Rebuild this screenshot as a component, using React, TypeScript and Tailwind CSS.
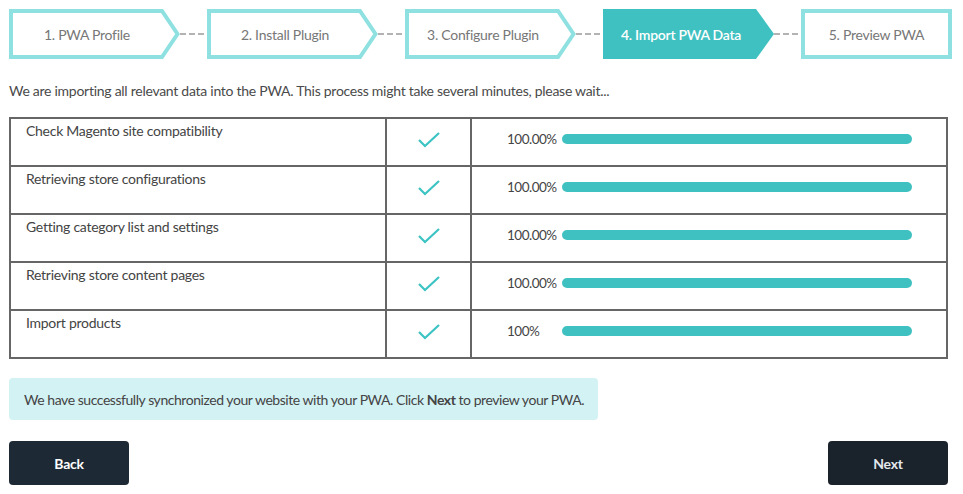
import React from "react";

const steps = [
  { label: "1. PWA Profile", active: false },
  { label: "2. Install Plugin", active: false },
  { label: "3. Configure Plugin", active: false },
  { label: "4. Import PWA Data", active: true },
];

const rows = [
  { name: "Check Magento site compatibility", pct: "100.00%" },
  { name: "Retrieving store configurations", pct: "100.00%" },
  { name: "Getting category list and settings", pct: "100.00%" },
  { name: "Retrieving store content pages", pct: "100.00%" },
  { name: "Import products", pct: "100%" },
];

function Dash() {
  return (
    <svg width="27" height="50" className="shrink-0">
      <line x1="0" y1="25" x2="27" y2="25" stroke="#b3b3b3" strokeWidth="2" strokeDasharray="6 3" />
    </svg>
  );
}

function ArrowStep({ label, active }: { label: string; active: boolean }) {
  return (
    <div className="relative w-[171px] h-[50px] shrink-0">
      <svg width="171" height="50" className="absolute inset-0">
        {active ? (
          <polygon points="0,0 153,0 171,25 153,50 0,50" fill="#3fc1c1" />
        ) : (
          <polygon points="2,2 153,2 168.5,25 153,48 2,48" fill="#fff" stroke="#8fe1e1" strokeWidth="4" />
        )}
      </svg>
      <div
        className={
          "relative w-[156px] h-full flex items-center justify-center text-[14px] " +
          (active ? "text-white font-semibold" : "text-[#777]")
        }
      >
        {label}
      </div>
    </div>
  );
}

function Check() {
  return (
    <svg width="26" height="20" viewBox="0 0 26 20">
      <polyline points="3,10 9,16 23,3" fill="none" stroke="#3cc3c3" strokeWidth="2.2" />
    </svg>
  );
}

export default function App() {
  return (
    <div
      className="bg-white w-[963px] h-[494px] overflow-hidden tracking-[-0.27px]"
      style={{ fontFamily: "Lato, 'Noto Sans', sans-serif" }}
    >
      <div className="ml-[9px] w-[939px] pt-[9px]">
        <div className="flex items-center w-[943px]">
          {steps.map((s) => (
            <React.Fragment key={s.label}>
              <ArrowStep label={s.label} active={s.active} />
              <Dash />
            </React.Fragment>
          ))}
          <div className="w-[151px] h-[50px] shrink-0 border-4 border-[#8fe1e1] flex items-center justify-center text-[14px] text-[#777]">
            5. Preview PWA
          </div>
        </div>

        <p className="mt-[22px] text-[14px] leading-5 text-[#4a4a4a]">
          We are importing all relevant data into the PWA. This process might take several minutes, please wait...
        </p>

        <table className="mt-[16px] w-[939px] border-collapse border-2 border-[#666] text-[14px] text-[#444]">
          <tbody>
            {rows.map((r) => (
              <tr key={r.name} className="h-[48px]">
                <td className="w-[376px] border-2 border-[#666] align-top pl-[15px] pt-[2px] leading-5">{r.name}</td>
                <td className="w-[85px] border-2 border-[#666] align-top">
                  <div className="flex justify-center pt-[11px]">
                    <Check />
                  </div>
                </td>
                <td className="border-2 border-[#666] align-top">
                  <div className="flex items-center pl-[35px] pt-[10px]">
                    <span className="w-[55px] leading-5 text-[13.5px] text-[#444] tracking-[-0.5px]">{r.pct}</span>
                    <div className="w-[350px] h-[10px] rounded-full bg-[#3fc1c1]" />
                  </div>
                </td>
              </tr>
            ))}
          </tbody>
        </table>

        <div className="mt-[19px] w-[589px] h-[42px] rounded-[4px] bg-[#d3f2f4] flex items-center pl-[15px] text-[14px] text-[#444] whitespace-nowrap tracking-[-0.45px]">
          <span>
            We have successfully synchronized your website with your PWA. Click <b className="font-bold">Next</b> to preview your PWA.
          </span>
        </div>

        <div className="mt-[21px] flex justify-between">
          <button className="w-[120px] h-[44px] rounded-[4px] bg-[#1d2935] text-white font-bold text-[14px]">Back</button>
          <button className="w-[120px] h-[44px] rounded-[4px] bg-[#1a222c] text-[#e4e8ec] font-bold text-[14px]">Next</button>
        </div>
      </div>
    </div>
  );
}
